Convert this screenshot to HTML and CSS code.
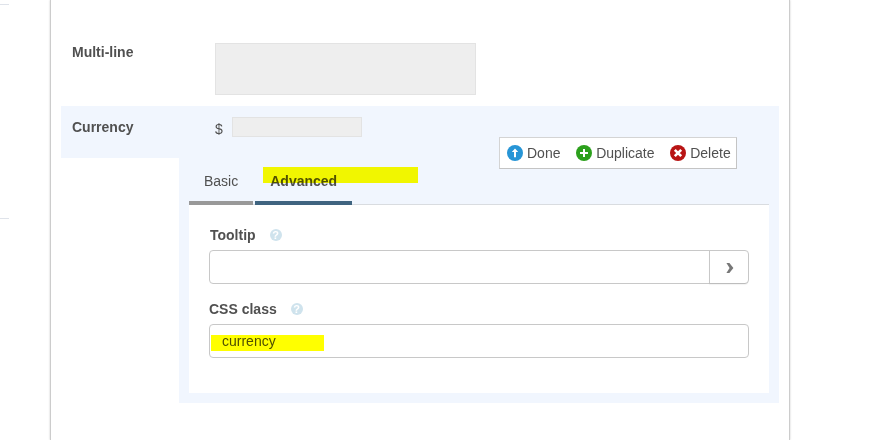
FILE: index.html
```html
<!DOCTYPE html>
<html lang="en">
<head>
  <meta charset="UTF-8">
  <title>Form builder</title>
  <link rel="stylesheet" href="styles.css">
</head>
<body>
  <div class="page">
    <div class="sidebar">
      <div class="sidebar-section"></div>
    </div>

    <div class="form-panel">
      <div class="field-row">
        <div class="field-label">Multi-line</div>
        <div class="preview-textarea"></div>
      </div>

      <div class="field-row selected">
        <div class="field-label">Currency</div>
        <div class="currency-sign">$</div>
        <div class="preview-input"></div>

        <div class="toolbar">
          <a class="tool">
            <svg width="16" height="16" viewBox="0 0 16 16"><circle cx="8" cy="8" r="8" fill="#2795d6"/><path d="M8 3.4L11.2 7H9V12.2H7V7H4.8z" fill="#fff"/></svg>
            Done
          </a>
          <a class="tool">
            <svg width="16" height="16" viewBox="0 0 16 16"><circle cx="8" cy="8" r="8" fill="#2ca01c"/><path d="M8 4v8M4 8h8" stroke="#fff" stroke-width="2"/></svg>
            Duplicate
          </a>
          <a class="tool">
            <svg width="16" height="16" viewBox="0 0 16 16"><circle cx="8" cy="8" r="8" fill="#b81414"/><path d="M4.8 4.8l6.4 6.4M11.2 4.8l-6.4 6.4" stroke="#fff" stroke-width="2.6"/></svg>
            Delete
          </a>
        </div>
      </div>

      <div class="properties">
        <div class="tabs">
          <div class="tab">Basic</div>
          <div class="tab active">Advanced<span class="marker marker-tab"></span></div>
        </div>

        <div class="tab-content">
          <div class="prop-label">Tooltip <span class="help">?</span></div>
          <div class="input-group">
            <div class="input"></div>
            <div class="expand">
              <svg width="8" height="10" viewBox="0 0 8 10"><path d="M0.4 0H3.4L7.4 5L3.4 10H0.4L3.6 5z" fill="#777"/></svg>
            </div>
          </div>

          <div class="prop-label css-label">CSS class <span class="help">?</span></div>
          <div class="input-group">
            <div class="input">currency<span class="marker marker-input"></span></div>
          </div>
        </div>
      </div>
    </div>
  </div>
</body>
</html>
```
FILE: styles.css
```css
* {
  box-sizing: border-box;
}

body {
  margin: 0;
  background-color: #fff;
  color: #505050;
  font-family: "Liberation Sans", Arial, sans-serif;
  font-size: 14px;
  line-height: 20px;
  overflow: hidden;
}

.page {
  display: flex;
  height: 440px;
}

.sidebar {
  width: 9px;
  margin-right: 41px;
  padding-top: 4px;
}

.sidebar-section {
  height: 215px;
  border-top: 1px solid #dfe3ea;
  border-bottom: 1px solid #dfe3ea;
}

.form-panel {
  width: 740px;
  padding: 0 10px;
  border-left: 1px solid #ccc;
  border-right: 1px solid #ccc;
  box-shadow: 0 0 2px rgba(0, 0, 0, 0.2);
}

/* Field rows */
.field-row {
  display: flex;
  height: 106px;
  padding-top: 42px;
}

.field-row.selected {
  position: relative;
  height: 52px;
  padding-top: 11px;
  background-color: #f1f6fe;
}

.field-label {
  width: 154px;
  padding-left: 11px;
  font-weight: bold;
}

.preview-textarea {
  width: 261px;
  height: 52px;
  margin-top: 1px;
  background-color: #eee;
  border: 1px solid #e3e3e3;
}

.currency-sign {
  width: 17px;
  padding-top: 2px;
}

.preview-input {
  width: 130px;
  height: 20px;
  background-color: #eee;
  border: 1px solid #e3e3e3;
}

/* Actions over the selected row */
.toolbar {
  position: absolute;
  top: 31px;
  right: 42px;
  z-index: 1;
  display: flex;
  align-items: center;
  gap: 15.7px;
  width: 238px;
  height: 32px;
  padding-left: 7px;
  background-color: #fff;
  border: 1px solid #d4d4d4;
  border-right-color: #c4c4c4;
  border-bottom-color: #c4c4c4;
}

.tool {
  display: flex;
  align-items: center;
  gap: 4px;
}

/* Properties of the selected field */
.properties {
  margin-left: 118px;
  padding: 0 10px 10px;
  background-color: #f1f6fe;
}

.tabs {
  display: flex;
  gap: 2px;
  height: 47px;
  box-shadow: inset 0 -1px 0 #d9dce0;
}

.tab {
  position: relative;
  padding: 13px 15px 0;
  border-bottom: 4px solid #999;
}

.tab.active {
  border-bottom-color: #3f6480;
  font-weight: bold;
}

.tab-content {
  height: 188px;
  padding: 20px 20px 0;
  background-color: #fff;
}

.prop-label {
  display: flex;
  align-items: center;
  gap: 14px;
  height: 20px;
  margin-bottom: 5px;
  padding-left: 1px;
  font-weight: bold;
}

.css-label {
  padding-left: 0;
}

.help {
  width: 12px;
  height: 12px;
  border-radius: 50%;
  background-color: #cfe3ed;
  color: #fff;
  font-size: 11px;
  line-height: 12px;
  text-align: center;
}

.input-group {
  display: flex;
  height: 34px;
  margin-bottom: 15px;
  border: 1px solid #c8c8c8;
  border-radius: 4px;
}

.input {
  position: relative;
  flex: 1;
  padding: 6px 12px;
}

.expand {
  display: flex;
  align-items: center;
  justify-content: center;
  width: 39px;
  padding: 2px 0 0 2px;
  border-left: 1px solid #c8c8c8;
  border-radius: 0 3px 3px 0;
  box-shadow: 0 2px 1px rgba(0, 0, 0, 0.05);
}

/* Yellow highlighter strokes */
.marker {
  position: absolute;
  height: 16px;
  background-color: #ff0;
  mix-blend-mode: multiply;
}

.marker-tab {
  top: 9px;
  left: 8px;
  width: 155px;
}

.marker-input {
  top: 10px;
  left: 1px;
  width: 113px;
}
```
